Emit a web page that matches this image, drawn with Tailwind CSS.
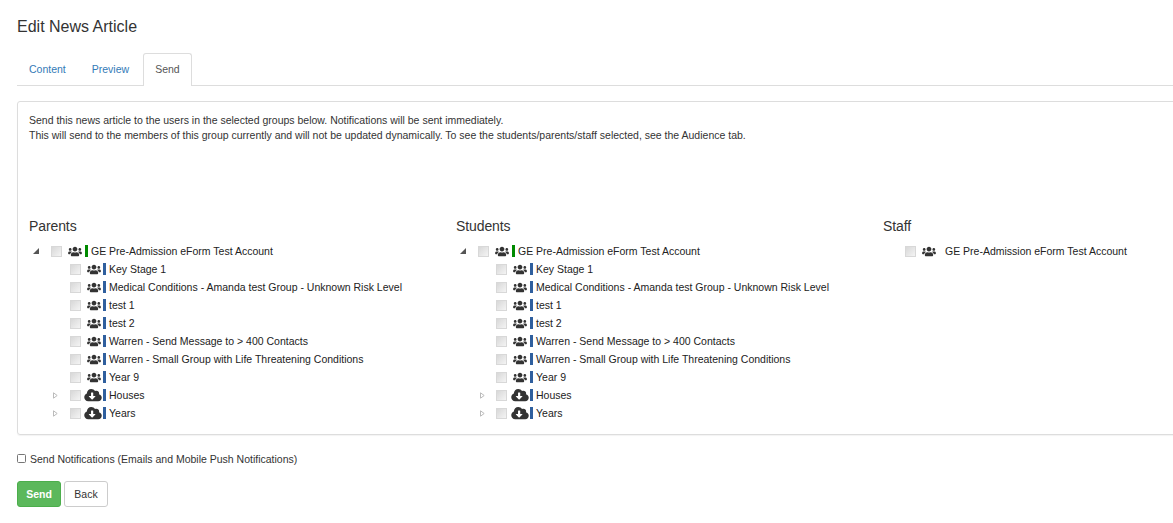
<!doctype html>
<html lang="en">
	<head>
		<meta charset="UTF-8" />
		<title>Edit News Article</title>
		<script src="https://cdn.jsdelivr.net/npm/@tailwindcss/browser@4"></script>
	</head>
	<body class="bg-white overflow-hidden font-['Liberation_Sans',Arial,sans-serif] text-[10.5px] leading-[15px] text-[#333]">
		<svg class="hidden">
			<symbol id="users" viewBox="0 0 640 512">
				<path fill="currentColor" d="M96 224c35.300 0 64-28.700 64-64s-28.700-64-64-64-64 28.700-64 64 28.700 64 64 64zm448 0c35.300 0 64-28.700 64-64s-28.700-64-64-64-64 28.700-64 64 28.700 64 64 64zm32 32h-64c-17.600 0-33.500 7.100-45.100 18.600 40.300 22.100 68.900 62 75.100 109.400h66c17.700 0 32-14.300 32-32v-32c0-35.300-28.700-64-64-64zm-256 0c61.900 0 112-50.100 112-112S381.900 32 320 32 208 82.100 208 144s50.100 112 112 112zm76.800 32h-8.300c-20.800 10-43.900 16-68.500 16s-47.600-6-68.500-16h-8.300C179.600 288 128 339.600 128 403.200V432c0 26.500 21.500 48 48 48h288c26.500 0 48-21.500 48-48v-28.800c0-63.600-51.600-115.200-115.200-115.200zm-223.700-13.400C161.500 263.100 145.600 256 128 256H64c-35.300 0-64 28.700-64 64v32c0 17.700 14.300 32 32 32h65.900c6.300-47.400 34.900-87.300 75.200-109.400z" />
			</symbol>
			<symbol id="cloud" viewBox="0 0 640 512">
				<path fill="currentColor" d="M537.600 226.600c4.100-10.700 6.400-22.400 6.400-34.600 0-53-43-96-96-96-19.700 0-38.100 6-53.300 16.200C367 64.200 315.300 32 256 32c-88.400 0-160 71.600-160 160 0 2.700.1 5.400.2 8.100C40.200 219.800 0 273.200 0 336c0 79.500 64.500 144 144 144h368c70.700 0 128-57.300 128-128 0-61.900-44-113.600-102.400-125.400zm-132.900 88.700L299.300 420.700c-6.200 6.200-16.400 6.200-22.600 0L171.300 315.300c-10.100-10.100-2.900-27.300 11.300-27.300H248V176c0-8.800 7.200-16 16-16h48c8.800 0 16 7.200 16 16v112h65.400c14.200 0 21.400 17.200 11.300 27.300z" />
			</symbol>
		</svg>

		<div class="pl-[17px]">
			<h1 class="pt-[18px] text-[16px] leading-[18px] font-normal text-[#333]">Edit News Article</h1>

			<!-- tabs -->
			<div class="mt-[17px] flex h-[33px] border-b border-[#ddd]">
				<a class="px-3 pt-[9px] text-[#337ab7]">Content</a>
				<a class="ml-[2px] px-3 pt-[9px] text-[#337ab7]">Preview</a>
				<a class="ml-[2px] h-[33px] pl-[11px] pr-[11px] pt-[8px] bg-white border border-[#ddd] border-b-0 rounded-t-[3px] text-[#555]">Send</a>
			</div>

			<!-- panel -->
			<div class="mt-[15px] w-[1170px] h-[334px] border border-[#ddd] rounded-[3px] shadow-[0_1px_1px_rgba(0,0,0,0.05)] pl-[11px] pt-[11px]">
				<p>Send this news article to the users in the selected groups below. Notifications will be sent immediately.</p>
				<p>This will send to the members of this group currently and will not be updated dynamically. To see the students/parents/staff selected, see the Audience tab.</p>

				<div class="mt-[75px] flex text-[#222]">
					<!-- parents -->
					<div class="w-[427px] shrink-0">
						<h3 class="text-[14px] tracking-[-0.1px] leading-[16px] font-normal text-[#333]">Parents</h3>
						<div class="mt-[8px]">
							<div class="flex items-center h-[18px]">
								<svg class="ml-[4px] w-[6px] h-[6px]" viewBox="0 0 6 6"><path fill="#555" d="M6 0v6H0z" /></svg>
								<span class="ml-[12px] w-[11px] h-[11px] border border-[#d8d8d8] bg-linear-to-br from-[#d8d8d8] to-[#f4f4f4]"></span>
								<svg class="ml-[6px] w-[14px] h-[11px] text-[#333]"><use href="#users" /></svg>
								<span class="ml-[3px] w-[3px] h-[12px] bg-[#008a00]"></span>
								<span class="ml-[3px]">GE Pre-Admission eForm Test Account</span>
							</div>
							<div class="flex items-center h-[18px] pl-[41px]">
								<span class="w-[11px] h-[11px] border border-[#d8d8d8] bg-linear-to-br from-[#d8d8d8] to-[#f4f4f4]"></span>
								<svg class="ml-[6px] w-[14px] h-[11px] text-[#333]"><use href="#users" /></svg>
								<span class="ml-[2px] w-[3px] h-[12px] bg-[#2f5f9e]"></span>
								<span class="ml-[3px]">Key Stage 1</span>
							</div>
							<div class="flex items-center h-[18px] pl-[41px]">
								<span class="w-[11px] h-[11px] border border-[#d8d8d8] bg-linear-to-br from-[#d8d8d8] to-[#f4f4f4]"></span>
								<svg class="ml-[6px] w-[14px] h-[11px] text-[#333]"><use href="#users" /></svg>
								<span class="ml-[2px] w-[3px] h-[12px] bg-[#2f5f9e]"></span>
								<span class="ml-[3px]">Medical Conditions - Amanda test Group - Unknown Risk Level</span>
							</div>
							<div class="flex items-center h-[18px] pl-[41px]">
								<span class="w-[11px] h-[11px] border border-[#d8d8d8] bg-linear-to-br from-[#d8d8d8] to-[#f4f4f4]"></span>
								<svg class="ml-[6px] w-[14px] h-[11px] text-[#333]"><use href="#users" /></svg>
								<span class="ml-[2px] w-[3px] h-[12px] bg-[#2f5f9e]"></span>
								<span class="ml-[3px]">test 1</span>
							</div>
							<div class="flex items-center h-[18px] pl-[41px]">
								<span class="w-[11px] h-[11px] border border-[#d8d8d8] bg-linear-to-br from-[#d8d8d8] to-[#f4f4f4]"></span>
								<svg class="ml-[6px] w-[14px] h-[11px] text-[#333]"><use href="#users" /></svg>
								<span class="ml-[2px] w-[3px] h-[12px] bg-[#2f5f9e]"></span>
								<span class="ml-[3px]">test 2</span>
							</div>
							<div class="flex items-center h-[18px] pl-[41px]">
								<span class="w-[11px] h-[11px] border border-[#d8d8d8] bg-linear-to-br from-[#d8d8d8] to-[#f4f4f4]"></span>
								<svg class="ml-[6px] w-[14px] h-[11px] text-[#333]"><use href="#users" /></svg>
								<span class="ml-[2px] w-[3px] h-[12px] bg-[#2f5f9e]"></span>
								<span class="ml-[3px]">Warren - Send Message to &gt; 400 Contacts</span>
							</div>
							<div class="flex items-center h-[18px] pl-[41px]">
								<span class="w-[11px] h-[11px] border border-[#d8d8d8] bg-linear-to-br from-[#d8d8d8] to-[#f4f4f4]"></span>
								<svg class="ml-[6px] w-[14px] h-[11px] text-[#333]"><use href="#users" /></svg>
								<span class="ml-[2px] w-[3px] h-[12px] bg-[#2f5f9e]"></span>
								<span class="ml-[3px]">Warren - Small Group with Life Threatening Conditions</span>
							</div>
							<div class="flex items-center h-[18px] pl-[41px]">
								<span class="w-[11px] h-[11px] border border-[#d8d8d8] bg-linear-to-br from-[#d8d8d8] to-[#f4f4f4]"></span>
								<svg class="ml-[6px] w-[14px] h-[11px] text-[#333]"><use href="#users" /></svg>
								<span class="ml-[2px] w-[3px] h-[12px] bg-[#2f5f9e]"></span>
								<span class="ml-[3px]">Year 9</span>
							</div>
							<div class="flex items-center h-[18px] pl-[24px]">
								<svg class="w-[5px] h-[7px]" viewBox="0 0 5 7"><path fill="none" stroke="#bbb" d="M.5.8 4.200 3.500.5 6.200z" /></svg>
								<span class="ml-[12px] w-[11px] h-[11px] border border-[#d8d8d8] bg-linear-to-br from-[#d8d8d8] to-[#f4f4f4]"></span>
								<svg class="ml-[3px] w-[18px] h-[14px] text-[#333]"><use href="#cloud" /></svg>
								<span class="ml-[1px] w-[3px] h-[12px] bg-[#2f5f9e]"></span>
								<span class="ml-[3px]">Houses</span>
							</div>
							<div class="flex items-center h-[18px] pl-[24px]">
								<svg class="w-[5px] h-[7px]" viewBox="0 0 5 7"><path fill="none" stroke="#bbb" d="M.5.8 4.200 3.500.5 6.200z" /></svg>
								<span class="ml-[12px] w-[11px] h-[11px] border border-[#d8d8d8] bg-linear-to-br from-[#d8d8d8] to-[#f4f4f4]"></span>
								<svg class="ml-[3px] w-[18px] h-[14px] text-[#333]"><use href="#cloud" /></svg>
								<span class="ml-[1px] w-[3px] h-[12px] bg-[#2f5f9e]"></span>
								<span class="ml-[3px]">Years</span>
							</div>
						</div>
					</div>

					<!-- students -->
					<div class="w-[427px] shrink-0">
						<h3 class="text-[14px] tracking-[-0.1px] leading-[16px] font-normal text-[#333]">Students</h3>
						<div class="mt-[8px]">
							<div class="flex items-center h-[18px]">
								<svg class="ml-[4px] w-[6px] h-[6px]" viewBox="0 0 6 6"><path fill="#555" d="M6 0v6H0z" /></svg>
								<span class="ml-[12px] w-[11px] h-[11px] border border-[#d8d8d8] bg-linear-to-br from-[#d8d8d8] to-[#f4f4f4]"></span>
								<svg class="ml-[6px] w-[14px] h-[11px] text-[#333]"><use href="#users" /></svg>
								<span class="ml-[3px] w-[3px] h-[12px] bg-[#008a00]"></span>
								<span class="ml-[3px]">GE Pre-Admission eForm Test Account</span>
							</div>
							<div class="flex items-center h-[18px] pl-[40px]">
								<span class="w-[11px] h-[11px] border border-[#d8d8d8] bg-linear-to-br from-[#d8d8d8] to-[#f4f4f4]"></span>
								<svg class="ml-[6px] w-[14px] h-[11px] text-[#333]"><use href="#users" /></svg>
								<span class="ml-[3px] w-[3px] h-[12px] bg-[#2f5f9e]"></span>
								<span class="ml-[3px]">Key Stage 1</span>
							</div>
							<div class="flex items-center h-[18px] pl-[40px]">
								<span class="w-[11px] h-[11px] border border-[#d8d8d8] bg-linear-to-br from-[#d8d8d8] to-[#f4f4f4]"></span>
								<svg class="ml-[6px] w-[14px] h-[11px] text-[#333]"><use href="#users" /></svg>
								<span class="ml-[3px] w-[3px] h-[12px] bg-[#2f5f9e]"></span>
								<span class="ml-[3px]">Medical Conditions - Amanda test Group - Unknown Risk Level</span>
							</div>
							<div class="flex items-center h-[18px] pl-[40px]">
								<span class="w-[11px] h-[11px] border border-[#d8d8d8] bg-linear-to-br from-[#d8d8d8] to-[#f4f4f4]"></span>
								<svg class="ml-[6px] w-[14px] h-[11px] text-[#333]"><use href="#users" /></svg>
								<span class="ml-[3px] w-[3px] h-[12px] bg-[#2f5f9e]"></span>
								<span class="ml-[3px]">test 1</span>
							</div>
							<div class="flex items-center h-[18px] pl-[40px]">
								<span class="w-[11px] h-[11px] border border-[#d8d8d8] bg-linear-to-br from-[#d8d8d8] to-[#f4f4f4]"></span>
								<svg class="ml-[6px] w-[14px] h-[11px] text-[#333]"><use href="#users" /></svg>
								<span class="ml-[3px] w-[3px] h-[12px] bg-[#2f5f9e]"></span>
								<span class="ml-[3px]">test 2</span>
							</div>
							<div class="flex items-center h-[18px] pl-[40px]">
								<span class="w-[11px] h-[11px] border border-[#d8d8d8] bg-linear-to-br from-[#d8d8d8] to-[#f4f4f4]"></span>
								<svg class="ml-[6px] w-[14px] h-[11px] text-[#333]"><use href="#users" /></svg>
								<span class="ml-[3px] w-[3px] h-[12px] bg-[#2f5f9e]"></span>
								<span class="ml-[3px]">Warren - Send Message to &gt; 400 Contacts</span>
							</div>
							<div class="flex items-center h-[18px] pl-[40px]">
								<span class="w-[11px] h-[11px] border border-[#d8d8d8] bg-linear-to-br from-[#d8d8d8] to-[#f4f4f4]"></span>
								<svg class="ml-[6px] w-[14px] h-[11px] text-[#333]"><use href="#users" /></svg>
								<span class="ml-[3px] w-[3px] h-[12px] bg-[#2f5f9e]"></span>
								<span class="ml-[3px]">Warren - Small Group with Life Threatening Conditions</span>
							</div>
							<div class="flex items-center h-[18px] pl-[40px]">
								<span class="w-[11px] h-[11px] border border-[#d8d8d8] bg-linear-to-br from-[#d8d8d8] to-[#f4f4f4]"></span>
								<svg class="ml-[6px] w-[14px] h-[11px] text-[#333]"><use href="#users" /></svg>
								<span class="ml-[3px] w-[3px] h-[12px] bg-[#2f5f9e]"></span>
								<span class="ml-[3px]">Year 9</span>
							</div>
							<div class="flex items-center h-[18px] pl-[24px]">
								<svg class="w-[5px] h-[7px]" viewBox="0 0 5 7"><path fill="none" stroke="#bbb" d="M.5.8 4.200 3.500.5 6.200z" /></svg>
								<span class="ml-[11px] w-[11px] h-[11px] border border-[#d8d8d8] bg-linear-to-br from-[#d8d8d8] to-[#f4f4f4]"></span>
								<svg class="ml-[4px] w-[18px] h-[14px] text-[#333]"><use href="#cloud" /></svg>
								<span class="ml-[1px] w-[3px] h-[12px] bg-[#2f5f9e]"></span>
								<span class="ml-[3px]">Houses</span>
							</div>
							<div class="flex items-center h-[18px] pl-[24px]">
								<svg class="w-[5px] h-[7px]" viewBox="0 0 5 7"><path fill="none" stroke="#bbb" d="M.5.8 4.200 3.500.5 6.200z" /></svg>
								<span class="ml-[11px] w-[11px] h-[11px] border border-[#d8d8d8] bg-linear-to-br from-[#d8d8d8] to-[#f4f4f4]"></span>
								<svg class="ml-[4px] w-[18px] h-[14px] text-[#333]"><use href="#cloud" /></svg>
								<span class="ml-[1px] w-[3px] h-[12px] bg-[#2f5f9e]"></span>
								<span class="ml-[3px]">Years</span>
							</div>
						</div>
					</div>

					<!-- staff -->
					<div class="w-[280px] shrink-0">
						<h3 class="text-[14px] tracking-[-0.1px] leading-[16px] font-normal text-[#333]">Staff</h3>
						<div class="mt-[8px]">
							<div class="flex items-center h-[18px] pl-[22px]">
								<span class="w-[11px] h-[11px] border border-[#d8d8d8] bg-linear-to-br from-[#d8d8d8] to-[#f4f4f4]"></span>
								<svg class="ml-[6px] w-[14px] h-[11px] text-[#333]"><use href="#users" /></svg>
								<span class="ml-[9px]">GE Pre-Admission eForm Test Account</span>
							</div>
						</div>
					</div>
				</div>
			</div>

			<!-- footer -->
			<label class="mt-[17px] flex h-[15px] items-center">
				<input type="checkbox" class="appearance-none w-[9px] h-[9px] -mt-[3px] border border-[#767676] rounded-[1.5px] bg-white" />
				<span class="ml-[4px]">Send Notifications (Emails and Mobile Push Notifications)</span>
			</label>
			<div class="mt-[14px] flex gap-[3px]">
				<button class="w-[44px] h-[26px] bg-[#5cb85c] border border-[#4cae4c] rounded-[3px] font-bold text-white">Send</button>
				<button class="w-[44px] h-[26px] bg-white border border-[#ccc] rounded-[3px] text-[#333]">Back</button>
			</div>
		</div>
	</body>
</html>
